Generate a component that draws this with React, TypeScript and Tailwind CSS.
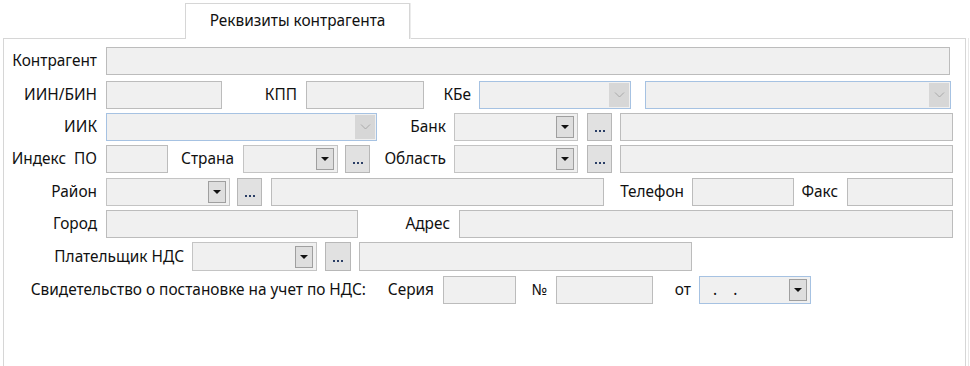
import type { ReactNode } from 'react'

function Label({ className, children }: { className: string; children: ReactNode }) {
  return <span className={`shrink-0 whitespace-pre text-right ${className}`}>{children}</span>
}

function Field({ className }: { className: string }) {
  return <div className={`h-full shrink-0 border border-[#bcbcbc] bg-[#f0f0f0] ${className}`} />
}

function Chevron() {
  return (
    <svg width="11" height="6" viewBox="0 0 11 6">
      <path d="M1 0.5l4.5 4.5 4.5-4.5" stroke="#a9a9a9" strokeWidth="1" fill="none" />
    </svg>
  )
}

// blue-bordered combo with flat grey arrow strip
function BlueCombo({ className }: { className: string }) {
  return (
    <div className={`flex h-full shrink-0 border border-[#a6c2e2] bg-[#f0f0f0] ${className}`}>
      <div className="flex-1" />
      <div className="my-px mr-px flex w-[20px] items-center justify-center bg-[#d7d7d7]">
        <Chevron />
      </div>
    </div>
  )
}

function DropButton() {
  return (
    <div className="flex h-[22px] w-[18px] items-center justify-center border border-[#9f9f9f] bg-[#dedede]">
      <svg width="8" height="4" viewBox="0 0 8 4">
        <path d="M0 0h8L4 4z" fill="#111" />
      </svg>
    </div>
  )
}

function Combo({ className }: { className: string }) {
  return (
    <div
      className={`flex h-full shrink-0 items-center justify-end border border-[#c4c4c4] bg-[#f0f0f0] pr-[3px] ${className}`}
    >
      <DropButton />
    </div>
  )
}

function Dots({ className }: { className: string }) {
  return (
    <div
      className={`flex h-full w-[25px] shrink-0 items-end justify-center gap-[2px] border border-[#b7b7b7] bg-[#e1e1e1] pb-[8px] ${className}`}
    >
      <span className="h-[2px] w-[2px] bg-[#2b3f66]" />
      <span className="h-[2px] w-[2px] bg-[#2b3f66]" />
      <span className="h-[2px] w-[2px] bg-[#2b3f66]" />
    </div>
  )
}

export default function App() {
  return (
    <div className="h-[366px] w-[970px] overflow-hidden bg-white font-['Noto_Sans',sans-serif] text-[15.4px] text-[#111]">
      <div className="flex h-[38px] items-end pl-[185px]">
        <div className="relative z-10 -mb-px flex h-[36px] w-[225px] items-center justify-center border border-b-0 border-[#d6d6d6] bg-white pb-[1px] shadow-[1px_0_0_#ececec]">
          Реквизиты контрагента
        </div>
      </div>

      <div className="flex">
        <div className="ml-[3px] h-[330px] w-[963px] shrink-0 border border-[#d6d6d6] bg-white pt-[8px]">
          <div className="flex h-[28px] items-center">
            <Label className="w-[93px]">Контрагент</Label>
            <Field className="ml-[9px] w-[844px]" />
          </div>

          <div className="mt-[6px] flex h-[28px] items-center">
            <Label className="w-[93px]">ИИН/БИН</Label>
            <Field className="ml-[9px] w-[116px]" />
            <Label className="w-[75px]">КПП</Label>
            <Field className="ml-[9px] w-[118px]" />
            <Label className="w-[47px]">КБе</Label>
            <BlueCombo className="ml-[8px] w-[152px]" />
            <BlueCombo className="ml-[14px] w-[306px]" />
          </div>

          <div className="mt-[4px] flex h-[28px] items-center">
            <Label className="w-[93px]">ИИК</Label>
            <BlueCombo className="ml-[9px] w-[271px]" />
            <Label className="w-[69px]">Банк</Label>
            <Combo className="ml-[8px] w-[124px]" />
            <Dots className="ml-[9px]" />
            <Field className="ml-[8px] w-[333px]" />
          </div>

          <div className="mt-[4px] flex h-[28px] items-center">
            <Label className="w-[93px]">{'Индекс  ПО'}</Label>
            <Field className="ml-[9px] w-[62px]" />
            <Label className="w-[66px]">Страна</Label>
            <Combo className="ml-[9px] w-[95px]" />
            <Dots className="ml-[7px]" />
            <Label className="w-[76px]">Область</Label>
            <Combo className="ml-[8px] w-[124px]" />
            <Dots className="ml-[9px]" />
            <Field className="ml-[8px] w-[333px]" />
          </div>

          <div className="mt-[5px] flex h-[28px] items-center">
            <Label className="w-[93px]">Район</Label>
            <Combo className="ml-[9px] w-[124px]" />
            <Dots className="ml-[7px]" />
            <Field className="ml-[9px] w-[333px]" />
            <Label className="w-[80px]">Телефон</Label>
            <Field className="ml-[8px] w-[102px]" />
            <Label className="w-[44px]">Факс</Label>
            <Field className="ml-[9px] w-[106px]" />
          </div>

          <div className="mt-[4px] flex h-[28px] items-center">
            <Label className="w-[93px]">Город</Label>
            <Field className="ml-[9px] w-[252px]" />
            <Label className="w-[92px]">Адрес</Label>
            <Field className="ml-[9px] w-[494px]" />
          </div>

          <div className="mt-[4px] flex h-[29px] items-center">
            <Label className="w-[180px]">Плательщик НДС</Label>
            <Combo className="ml-[8px] w-[125px]" />
            <Dots className="ml-[8px] w-[26px]" />
            <Field className="ml-[8px] w-[333px]" />
          </div>

          <div className="mt-[5px] flex h-[28px] items-center">
            <Label className="w-[362px]">Свидетельство о постановке на учет по НДС:</Label>
            <Label className="w-[68px]">Серия</Label>
            <Field className="ml-[9px] w-[73px]" />
            <Label className="w-[31px]">№</Label>
            <Field className="ml-[9px] w-[97px]" />
            <Label className="w-[38px]">от</Label>
            <div className="ml-[8px] flex h-full w-[112px] shrink-0 items-center border border-[#a6c2e2] bg-[#f0f0f0] pl-[13px] pr-[3px]">
              <span className="flex-1 whitespace-pre">{'.    .'}</span>
              <DropButton />
            </div>
          </div>
        </div>
        <div className="ml-[2px] h-[330px] w-px bg-[#e8e8e8]" />
      </div>
    </div>
  )
}
